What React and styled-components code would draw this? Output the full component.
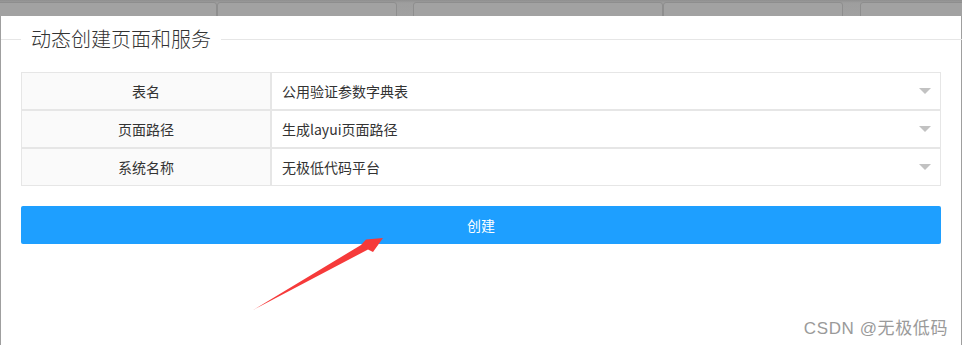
import React from "react";
import styled, { createGlobalStyle } from "styled-components";

const GlobalStyle = createGlobalStyle`
  html, body {
    margin: 0;
    padding: 0;
    background: #9f9f9f;
    overflow: hidden;
  }
  #root {
    height: 345px;
  }
`;

const rows = [
  { label: "表名", value: "公用验证参数字典表" },
  { label: "页面路径", value: "生成layui页面路径" },
  { label: "系统名称", value: "无极低代码平台" },
];

// cells of the page that sits under the dimmed overlay
const backCells = [
  { width: 227, gap: -10 },
  { width: 180, gap: 0 },
  { width: 250, gap: 16 },
  { width: 180, gap: 0 },
  { width: 120, gap: 17 },
];

const App = () => {
  return (
    <>
      <GlobalStyle />
      <Page>
        <Backdrop>
          {backCells.map((cell, i) => (
            <BackCell key={i} $width={cell.width} $gap={cell.gap} />
          ))}
        </Backdrop>
        <Modal>
          <Field>
            <Legend>动态创建页面和服务</Legend>
            <FormBox>
              {rows.map((row) => (
                <Row key={row.label}>
                  <Label>{row.label}</Label>
                  <SelectBox>
                    <span>{row.value}</span>
                    <Edge />
                  </SelectBox>
                </Row>
              ))}
              <CreateButton>创建</CreateButton>
            </FormBox>
          </Field>
        </Modal>
        <Arrow width="962" height="345" viewBox="0 0 962 345">
          <polygon
            points="253,310 361,245 366,239.5 383,238 373,252 368,249.5"
            fill="#f63a3a"
          />
        </Arrow>
        <Watermark>CSDN @无极低码</Watermark>
      </Page>
    </>
  );
};

export default App;

const Page = styled.div`
  position: relative;
  height: 345px;
  display: flex;
  flex-direction: column;
  font-family: "Noto Sans CJK SC", "Noto Sans", sans-serif;
`;

const Backdrop = styled.div`
  height: 16px;
  display: flex;
  align-items: flex-start;
  overflow: hidden;
  background: linear-gradient(#8f8f8f 0, #9e9e9e 3px, #a1a1a1 16px);
`;

const BackCell = styled.div`
  flex: none;
  box-sizing: border-box;
  width: ${(p) => p.$width}px;
  margin-left: ${(p) => p.$gap}px;
  height: 40px;
  margin-top: 2px;
  border: 1px solid #8e8e8e;
  border-radius: 3px;
  background: #a2a2a2;
`;

const Modal = styled.div`
  flex: 1;
  margin: 0 1px;
  background: #ffffff;
  padding-top: 9px;
`;

const Field = styled.fieldset`
  margin: 0;
  padding: 0;
  border: none;
  border-top: 1px solid #e6e6e6;
`;

const Legend = styled.legend`
  margin-left: 20px;
  padding: 0 10px;
  font-size: 20px;
  font-weight: 300;
  line-height: 28px;
  color: #333;
`;

const FormBox = styled.div`
  padding: 19px 21px 0 20px;
  display: flex;
  flex-direction: column;
`;

const Row = styled.div`
  display: flex;
  height: 38px;
  font-size: 14px;
  color: #333;
`;

const Label = styled.div`
  box-sizing: border-box;
  width: 250px;
  flex: none;
  border: 1px solid #e6e6e6;
  background: #fafafa;
  display: flex;
  align-items: center;
  justify-content: center;
`;

const SelectBox = styled.div`
  position: relative;
  box-sizing: border-box;
  flex: 1;
  border: 1px solid #e6e6e6;
  background: #fff;
  padding-left: 10px;
  display: flex;
  align-items: center;
`;

const Edge = styled.i`
  position: absolute;
  right: 9px;
  top: 50%;
  margin-top: -3px;
  width: 0;
  height: 0;
  border-style: solid;
  border-width: 6px 6px 0 6px;
  border-color: #c2c2c2 transparent transparent transparent;
`;

const CreateButton = styled.button`
  margin-top: 20px;
  height: 38px;
  width: 920px;
  border: none;
  border-radius: 2px;
  background: #1e9fff;
  color: #fff;
  font-family: inherit;
  font-size: 14px;
  cursor: pointer;
`;

const Arrow = styled.svg`
  position: absolute;
  left: 0;
  top: 0;
  pointer-events: none;
`;

const Watermark = styled.div`
  position: absolute;
  right: 14px;
  bottom: 6px;
  font-family: "Liberation Sans", "Noto Sans CJK SC", sans-serif;
  font-size: 17px;
  letter-spacing: 0.6px;
  color: #9a9a9a;
  text-shadow: 0 0 1px #fff;
`;
